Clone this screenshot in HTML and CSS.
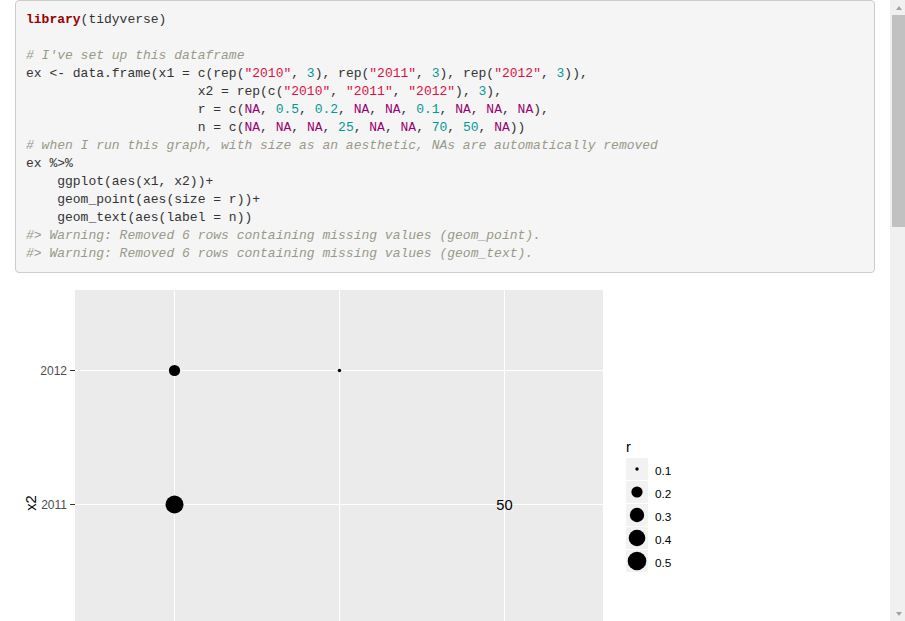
FILE: index.html
```html
<!DOCTYPE html>
<html>
<head>
<meta charset="utf-8">
<link rel="stylesheet" href="styles.css">
</head>
<body>
<div class="page">
  <div class="content">
<pre class="code"><span class="kw">library</span>(tidyverse)

<span class="cm"># I've set up this dataframe</span>
ex &lt;- data.frame(x1 = c(rep(<span class="st">"2010"</span>, <span class="nu">3</span>), rep(<span class="st">"2011"</span>, <span class="nu">3</span>), rep(<span class="st">"2012"</span>, <span class="nu">3</span>)),
                      x2 = rep(c(<span class="st">"2010"</span>, <span class="st">"2011"</span>, <span class="st">"2012"</span>), <span class="nu">3</span>),
                      r = c(<span class="na">NA</span>, <span class="nu">0.5</span>, <span class="nu">0.2</span>, <span class="na">NA</span>, <span class="na">NA</span>, <span class="nu">0.1</span>, <span class="na">NA</span>, <span class="na">NA</span>, <span class="na">NA</span>),
                      n = c(<span class="na">NA</span>, <span class="na">NA</span>, <span class="na">NA</span>, <span class="nu">25</span>, <span class="na">NA</span>, <span class="na">NA</span>, <span class="nu">70</span>, <span class="nu">50</span>, <span class="na">NA</span>))
<span class="cm"># when I run this graph, with size as an aesthetic, NAs are automatically removed</span>
ex %&gt;%
    ggplot(aes(x1, x2))+
    geom_point(aes(size = r))+
    geom_text(aes(label = n))
<span class="cm">#&gt; Warning: Removed 6 rows containing missing values (geom_point).</span>
<span class="cm">#&gt; Warning: Removed 6 rows containing missing values (geom_text).</span></pre>
    <svg class="plot" width="700" height="338" viewBox="0 0 700 338">
      <rect x="60" y="7" width="528" height="340" fill="#ebebeb"/>
      <path d="M159.5 7V347M324.5 7V347M489.5 7V347M60 87.5H588M60 221.5H588" stroke="#ffffff" stroke-width="1.07" fill="none"/>
      <path d="M55 87.5H60M55 221.5H60" stroke="#333333" stroke-width="1.07" fill="none"/>
      <text class="tick" x="52" y="91.5" text-anchor="end">2012</text>
      <text class="tick" x="52" y="225.5" text-anchor="end">2011</text>
      <text class="axtitle" transform="translate(20.5,220) rotate(-90)" text-anchor="middle">x2</text>
      <circle cx="159.5" cy="87.5" r="5.6" fill="#000"/>
      <circle cx="159.5" cy="221.5" r="9" fill="#000"/>
      <circle cx="324.5" cy="87.5" r="1.7" fill="#000"/>
      <text class="geomtext" x="489.5" y="227" text-anchor="middle">50</text>
      <text class="legtitle" x="611" y="169">r</text>
      <rect x="611" y="175" width="22" height="22" fill="#f2f2f2"/>
      <rect x="611" y="198" width="22" height="22" fill="#f2f2f2"/>
      <rect x="611" y="221" width="22" height="22" fill="#f2f2f2"/>
      <rect x="611" y="244" width="22" height="22" fill="#f2f2f2"/>
      <rect x="611" y="267" width="22" height="22" fill="#f2f2f2"/>
      <circle cx="622" cy="186" r="1.7" fill="#000"/>
      <circle cx="622" cy="209" r="5.6" fill="#000"/>
      <circle cx="622" cy="232" r="7.2" fill="#000"/>
      <circle cx="622" cy="255" r="8.3" fill="#000"/>
      <circle cx="622" cy="278" r="9.3" fill="#000"/>
      <text class="legtext" x="640" y="192">0.1</text>
      <text class="legtext" x="640" y="215">0.2</text>
      <text class="legtext" x="640" y="238">0.3</text>
      <text class="legtext" x="640" y="261">0.4</text>
      <text class="legtext" x="640" y="284">0.5</text>
    </svg>
  </div>
  <div class="scrollbar">
    <div class="sb-btn"><span class="arrow-up"></span></div>
    <div class="sb-thumb"></div>
    <div class="sb-space"></div>
    <div class="sb-btn"><span class="arrow-down"></span></div>
  </div>
</div>
</body>
</html>
```
FILE: styles.css
```css
html, body {
  margin: 0;
  padding: 0;
  background: #ffffff;
}
body {
  height: 621px;
  overflow: hidden;
}
.page {
  display: flex;
  height: 621px;
}
.content {
  width: 860px;
  padding: 0 15px;
  overflow: hidden;
}
.code {
  margin: 0 0 10px 0;
  padding: 10px 10px 9px 10px;
  border: 1px solid #cccccc;
  border-radius: 4px;
  background: #f5f5f5;
  color: #333333;
  font-family: "Liberation Mono", "Courier New", monospace;
  font-size: 13px;
  line-height: 18px;
  white-space: pre;
  overflow: hidden;
}
.kw { color: #990000; font-weight: bold; }
.cm { color: #999988; font-style: italic; }
.st { color: #dd1144; }
.nu { color: #009999; }
.na { color: #990073; }
.plot {
  display: block;
}
.plot text {
  font-family: "Liberation Sans", Arial, sans-serif;
}
.tick { font-size: 12px; fill: #4d4d4d; }
.axtitle { font-size: 14.67px; fill: #000000; }
.geomtext { font-size: 14.67px; fill: #000000; }
.legtitle { font-size: 14.67px; fill: #000000; }
.legtext { font-size: 11.8px; fill: #000000; }
.scrollbar {
  width: 15px;
  flex: none;
  background: #f0f0f0;
  display: flex;
  flex-direction: column;
}
.sb-btn {
  height: 15px;
  display: flex;
  align-items: center;
  justify-content: center;
  padding-left: 2px;
}
.arrow-up {
  width: 0;
  height: 0;
  border-left: 3.5px solid transparent;
  border-right: 3.5px solid transparent;
  border-bottom: 4px solid #a3a3a3;
}
.arrow-down {
  width: 0;
  height: 0;
  border-left: 3.5px solid transparent;
  border-right: 3.5px solid transparent;
  border-top: 4px solid #a3a3a3;
}
.sb-thumb {
  height: 212px;
  margin-left: 2px;
  background: #c1c1c1;
}
.sb-space {
  flex: 1;
}
```
